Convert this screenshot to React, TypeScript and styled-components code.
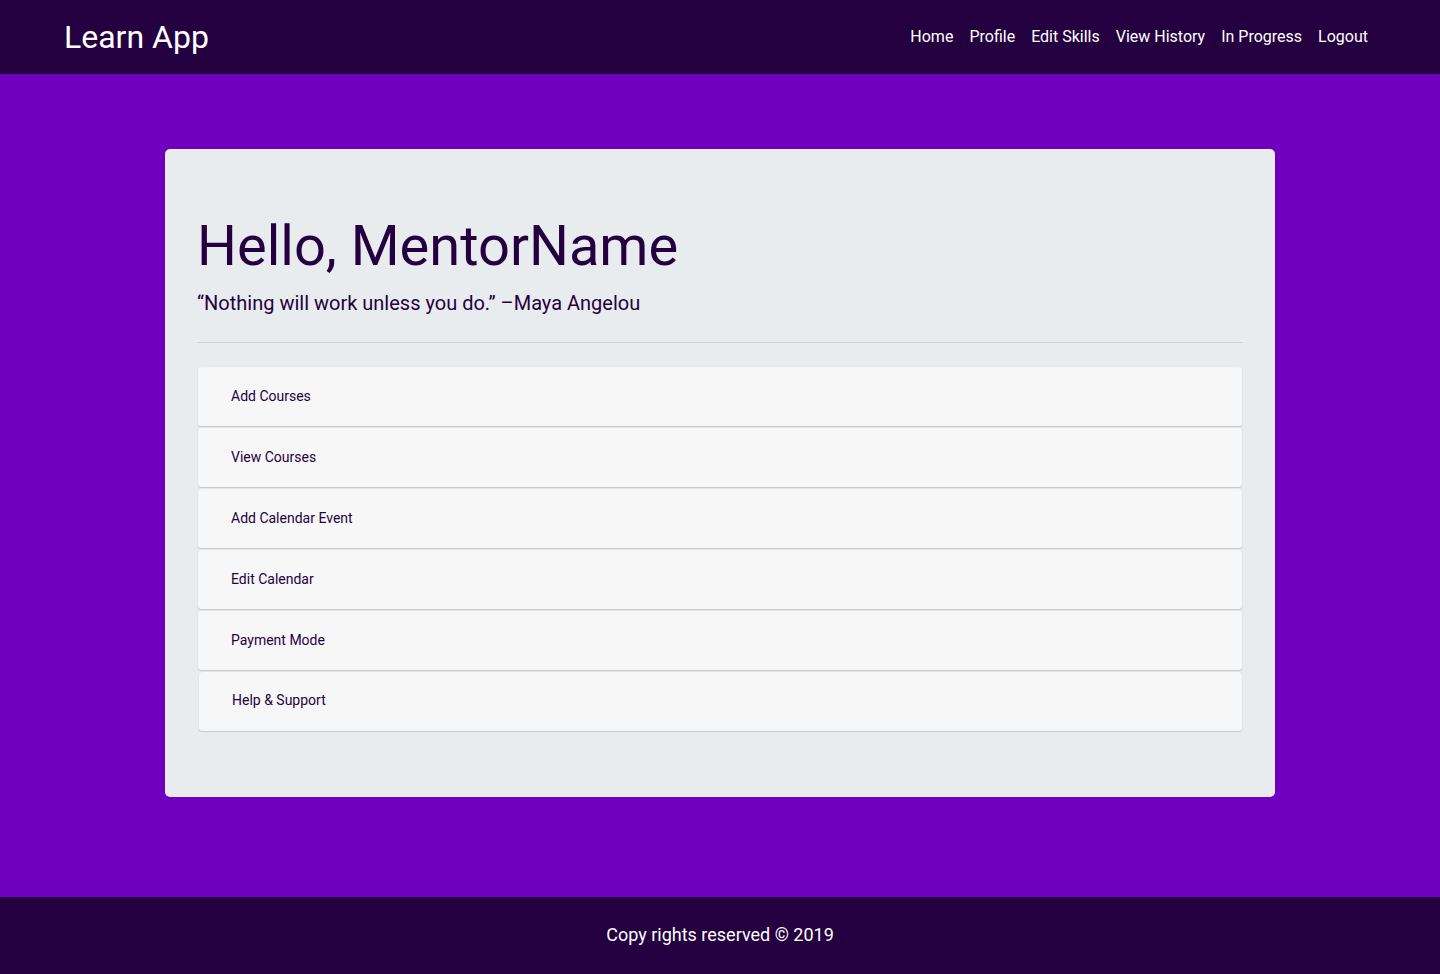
import * as React from 'react'
import styled, { createGlobalStyle } from 'styled-components'

const GlobalStyle = createGlobalStyle`
  * { box-sizing: border-box; }
  html, body { margin: 0; padding: 0; }
  body {
    font-family: Roboto, "Liberation Sans", Arial, sans-serif;
    background: #7000c0;
    color: #240041;
  }
`

const Navbar = styled.nav`
  height: 74px;
  background: #240041;
  display: flex;
  align-items: center;
  justify-content: space-between;
  padding: 0 64px 0 64px;
`

const Brand = styled.a`
  color: #fff;
  font-size: 32px;
  line-height: 1;
  text-decoration: none;
  margin-top: -1px;
`

const NavList = styled.ul`
  display: flex;
  list-style: none;
  margin: 0;
  padding: 0;
`

const NavLink = styled.a`
  display: block;
  color: #fff;
  font-size: 16px;
  padding: 0 8px;
  text-decoration: none;
  margin-top: -2px;
`

const Main = styled.main`
  padding: 75px 0 100px;
  display: flex;
  justify-content: center;
`

const Jumbotron = styled.section`
  width: 1110px;
  background: #e9ecef;
  border-radius: 5px;
  padding: 64px 32px 66px;
`

const Heading = styled.h1`
  font-size: 56px;
  font-weight: 400;
  line-height: 1.2;
  margin: 0 0 8px;
  color: #240041;
`

const Lead = styled.p`
  font-size: 20px;
  line-height: 1.5;
  margin: 0;
  color: #240041;
`

const Rule = styled.hr`
  border: 0;
  border-top: 1px solid rgba(0, 0, 0, 0.1);
  margin: 24px 0 24px;
`

const Menu = styled.div`
  display: flex;
  flex-direction: column;
  gap: 2px;
  padding: 0 1px;
`

const MenuItem = styled.a<{ $shift?: boolean }>`
  display: flex;
  align-items: center;
  height: 59px;
  margin-left: ${p => (p.$shift ? '1px' : '0')};
  padding: 0 33px ${p => (p.$shift ? '4px' : '2px')};
  background: #f7f7f7;
  border-radius: 3px;
  box-shadow: 0 1px 1px rgba(0, 0, 0, 0.14), 0 0 1px rgba(0, 0, 0, 0.12);
  font-size: 14px;
  color: #240041;
  text-decoration: none;
`

const Footer = styled.footer`
  height: 77px;
  padding-bottom: 2px;
  background: #240041;
  display: flex;
  align-items: center;
  justify-content: center;
  color: #fff;
  font-size: 18px;
`

const links = ['Home', 'Profile', 'Edit Skills', 'View History', 'In Progress', 'Logout']
const items = ['Add Courses', 'View Courses', 'Add Calendar Event', 'Edit Calendar', 'Payment Mode', 'Help & Support']

export default function App() {
  return (
    <>
      <GlobalStyle />
      <Navbar>
        <Brand href="#">Learn App</Brand>
        <NavList>
          {links.map(l => (
            <li key={l}>
              <NavLink href="#">{l}</NavLink>
            </li>
          ))}
        </NavList>
      </Navbar>
      <Main>
        <Jumbotron>
          <Heading>Hello, MentorName</Heading>
          <Lead>“Nothing will work unless you do.” –Maya Angelou</Lead>
          <Rule />
          <Menu>
            {items.map((it, i) => (
              <MenuItem key={it} href="#" $shift={i === items.length - 1}>
                {it}
              </MenuItem>
            ))}
          </Menu>
        </Jumbotron>
      </Main>
      <Footer>Copy rights reserved © 2019</Footer>
    </>
  )
}
